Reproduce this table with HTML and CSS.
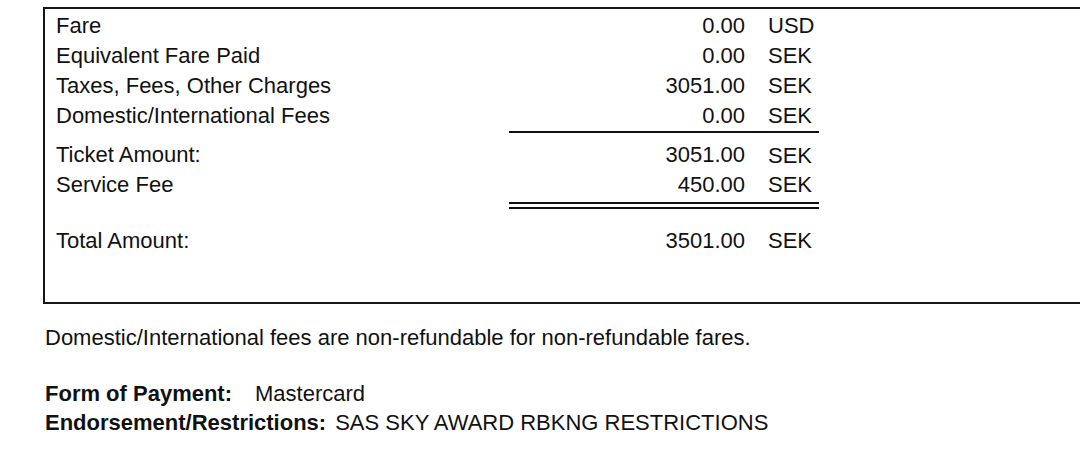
FILE: index.html
```html
<!DOCTYPE html>
<html>
<head>
<meta charset="utf-8">
<link rel="stylesheet" href="styles.css">
</head>
<body>
<div class="page">
  <div class="box">
    <div class="row"><span class="label">Fare</span><span class="amt">0.00</span><span class="cur">USD</span></div>
    <div class="row"><span class="label">Equivalent Fare Paid</span><span class="amt">0.00</span><span class="cur">SEK</span></div>
    <div class="row"><span class="label">Taxes, Fees, Other Charges</span><span class="amt">3051.00</span><span class="cur">SEK</span></div>
    <div class="row"><span class="label">Domestic/International Fees</span><span class="amt">0.00</span><span class="cur">SEK</span></div>
    <div class="row rule-row"><span></span><span class="rule"></span></div>
    <div class="row ticket"><span class="label">Ticket Amount:</span><span class="amt">3051.00</span><span class="cur low">SEK</span></div>
    <div class="row service"><span class="label">Service Fee</span><span class="amt">450.00</span><span class="cur">SEK</span></div>
    <div class="row rule-row"><span></span><span class="rule double"></span></div>
    <div class="row total"><span class="label">Total Amount:</span><span class="amt">3501.00</span><span class="cur">SEK</span></div>
  </div>
  <p class="note">Domestic/International fees are non-refundable for non-refundable fares.</p>
  <div class="info">
    <div class="info-line"><b class="key">Form of Payment:</b><span class="val pay">Mastercard</span></div>
    <div class="info-line"><b class="key">Endorsement/Restrictions:</b><span class="val endorse">SAS SKY AWARD RBKNG RESTRICTIONS</span></div>
  </div>
</div>
</body>
</html>
```

FILE: styles.css
```css
html, body {
  margin: 0;
  padding: 0;
  background: #ffffff;
}
body {
  width: 1080px;
  height: 460px;
  overflow: hidden;
  font-family: "Liberation Sans", Arial, sans-serif;
  font-size: 22px;
  color: #111111;
}
.page {
  padding: 7px 0 0 43px;
}
.box {
  border: 2px solid #161616;
  border-right: none;
  padding: 2px 0 46px 11px;
}
.row {
  display: grid;
  grid-template-columns: 453px 236px 74px;
  line-height: 30px;
  white-space: nowrap;
}
.amt {
  text-align: right;
}
.cur {
  padding-left: 23px;
}
.cur.low {
  padding-top: 3px;
  line-height: 28px;
}
.rule-row {
  line-height: 0;
}
.rule {
  grid-column: 2 / 4;
  height: 2px;
  background: #111111;
  margin-bottom: 6px;
}
.ticket {
  line-height: 31px;
}
.rule.double {
  height: 3px;
  background: transparent;
  border-top: 2px solid #111111;
  border-bottom: 2px solid #111111;
  margin: 2px 0 17px 0;
}
.note {
  margin: 19px 0 0 2px;
  line-height: 30px;
}
.info {
  margin: 26px 0 0 2px;
}
.info-line {
  line-height: 29px;
  white-space: nowrap;
}
.key {
  font-weight: bold;
}
.val.pay {
  margin-left: 23px;
}
.val.endorse {
  margin-left: 9px;
}
```
